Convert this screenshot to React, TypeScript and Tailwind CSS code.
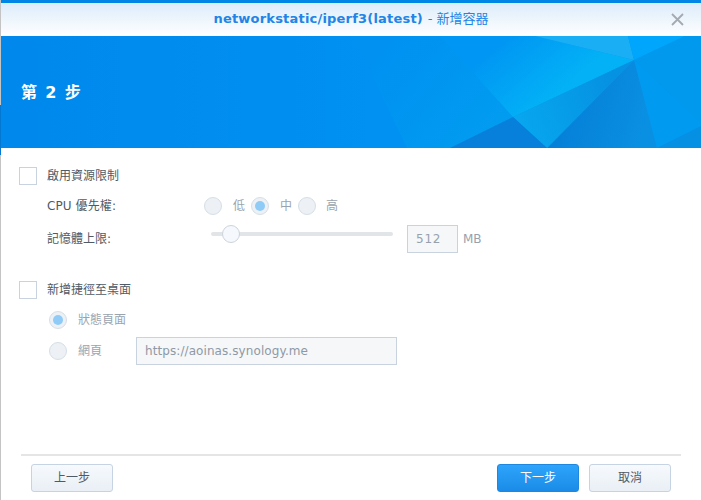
const font = "font-['DejaVu_Sans','Noto_Sans_CJK_TC',sans-serif]";

function Checkbox() {
  return <span className="h-[18px] w-[18px] shrink-0 border border-[#c8d3df] bg-white" />;
}

function Radio({ checked = false }: { checked?: boolean }) {
  return (
    <span className="flex h-[18px] w-[18px] shrink-0 items-center justify-center rounded-full border border-[#d5dee7] bg-[#edf1f5]">
      {checked && <span className="h-[10px] w-[10px] rounded-full bg-[#8fcbf7]" />}
    </span>
  );
}

// x coords here are page x, hence the viewBox offset of 1
function Banner() {
  return (
    <svg className="absolute inset-0 h-full w-full" viewBox="1 0 700 112" preserveAspectRatio="none">
      <defs>
        <linearGradient id="base" x1="0" y1="0" x2="1" y2="0">
          <stop offset="0" stopColor="#0088ec" />
          <stop offset="1" stopColor="#0099f8" />
        </linearGradient>
        <linearGradient id="left" x1="380" y1="0" x2="500" y2="100" gradientUnits="userSpaceOnUse">
          <stop offset="0" stopColor="#0091f1" />
          <stop offset="1" stopColor="#019cf0" />
        </linearGradient>
        <linearGradient id="bright" x1="490" y1="15" x2="540" y2="75" gradientUnits="userSpaceOnUse">
          <stop offset="0" stopColor="#0096f3" />
          <stop offset="1" stopColor="#03b2f6" />
        </linearGradient>
        <linearGradient id="mid" x1="520" y1="85" x2="610" y2="50" gradientUnits="userSpaceOnUse">
          <stop offset="0" stopColor="#07a6ee" />
          <stop offset="1" stopColor="#0592e2" />
        </linearGradient>
        <linearGradient id="dark" x1="560" y1="90" x2="640" y2="112" gradientUnits="userSpaceOnUse">
          <stop offset="0" stopColor="#0580d8" />
          <stop offset="1" stopColor="#0a90e2" />
        </linearGradient>
      </defs>
      <rect x="1" width="700" height="112" fill="url(#base)" />
      <polygon points="353,0 440,0 513,81 450,112 407,112" fill="url(#left)" />
      <polygon points="440,0 535,0 634,24 513,81" fill="url(#bright)" />
      <polygon points="535,0 628,0 634,24" fill="#1aaef5" />
      <polygon points="628,0 685,0 634,24" fill="#00a6fb" />
      <polygon points="685,0 701,0 701,88 634,24" fill="#0099ee" />
      <polygon points="634,24 701,88 701,90 657,112" fill="#009bf1" />
      <polygon points="701,90 701,112 657,112" fill="#0590e4" />
      <polygon points="634,24 657,112 547,112" fill="url(#dark)" />
      <polygon points="634,24 547,112 513,81" fill="url(#mid)" />
      <polygon points="513,81 547,112 450,112" fill="#0680da" />
    </svg>
  );
}

export default function App() {
  return (
    <div className={`${font} flex h-[500px] w-[701px] overflow-hidden bg-white`}>
      <div className="flex w-px shrink-0 flex-col">
        <div className="h-[105px] bg-[#c4c4c4]" />
        <div className="h-[50px] bg-[#0478d0]" />
        <div className="flex-1 bg-[#c4c4c4]" />
      </div>
      <div className="flex min-w-0 flex-1 flex-col">
        <div className="h-[3px] shrink-0 bg-[#0086e5]" />
        <header className="relative flex h-[33px] shrink-0 items-center justify-center bg-gradient-to-b from-[#dcecfa] to-white pb-[1px] text-[13px] font-bold tracking-[0.2px] text-[#2184e6]">
          <span>networkstatic/iperf3(latest) <span className="font-normal tracking-normal">- 新增容器</span></span>
          <svg className="absolute right-[17px] top-[10px] h-[13px] w-[13px]" viewBox="0 0 13 13" stroke="#a4aab0" strokeWidth="1.8" fill="none">
            <path d="M1 1l11 11M12 1L1 12" />
          </svg>
        </header>
        <div className="relative flex h-[112px] shrink-0 items-center pl-[20px] pt-[2px]">
          <Banner />
          <h1 className="relative text-[16px] font-bold tracking-[1.4px] text-white">第 2 步</h1>
        </div>

        <main className="flex flex-1 flex-col pl-[18px] pt-[19px] text-[12px] text-[#4f5a66]">
          <label className="flex h-[18px] items-center gap-[10px]">
            <Checkbox />
            <span>啟用資源限制</span>
          </label>
          <div className="mt-[12px] flex h-[18px] items-center pl-[28px]">
            <span className="w-[157px] tracking-[0.1px]">CPU 優先權:</span>
            <div className="flex items-center text-[#9aa4af]">
              <Radio />
              <span className="ml-[11px] w-[18px]">低</span>
              <Radio checked />
              <span className="ml-[11px] w-[18px]">中</span>
              <Radio />
              <span className="ml-[10px]">高</span>
            </div>
          </div>
          <div className="mt-[10px] flex h-[28px] items-center pl-[28px]">
            <span className="w-[164px]">記憶體上限:</span>
            <div className="relative mb-[10px] h-[4px] w-[182px] rounded-full bg-[#e1e5e8]">
              <span className="absolute left-[11px] top-[-7px] h-[18px] w-[18px] rounded-full border border-[#ccd4dc] bg-[#f5f9fd]" />
            </div>
            <span className="ml-[14px] flex h-[28px] w-[51px] items-center border border-[#c8d3df] bg-[#f5f7f9] pl-[8px] tracking-[0.8px] text-[#97a1ad]">512</span>
            <span className="ml-[5px] text-[#97a1ad]">MB</span>
          </div>
          <label className="mt-[28px] flex h-[18px] items-center gap-[10px]">
            <Checkbox />
            <span>新增捷徑至桌面</span>
          </label>
          <div className="mt-[12px] flex h-[18px] items-center gap-[11px] pl-[30px] text-[#9aa4af]">
            <Radio checked />
            <span>狀態頁面</span>
          </div>
          <div className="mt-[8px] flex h-[28px] items-center pl-[30px] text-[#9aa4af]">
            <Radio />
            <span className="ml-[11px] w-[58px]">網頁</span>
            <span className="flex h-[28px] w-[261px] items-center border border-[#c8d3df] bg-[#f5f7f9] pl-[8px] tracking-[0.08px] text-[#8f99a5]">https://aoinas.synology.me</span>
          </div>
        </main>

        <footer className="mb-[8px] ml-[20px] mr-[20px] flex items-center border-t-2 border-[#e5e5e5] px-[10px] pt-[8px] text-[12px]">
          <button className="h-[28px] w-[82px] rounded-[3px] border border-[#c5d3e2] bg-gradient-to-b from-[#f6fafd] to-[#e9eff5] text-[#4f5a66]">上一步</button>
          <button className="ml-auto h-[28px] w-[82px] rounded-[3px] border border-[#1e88de] bg-gradient-to-b from-[#2ea4fb] to-[#1a8ce8] text-white">下一步</button>
          <button className="ml-[10px] h-[28px] w-[82px] rounded-[3px] border border-[#c5d3e2] bg-gradient-to-b from-[#f6fafd] to-[#e9eff5] text-[#4f5a66]">取消</button>
        </footer>
      </div>
    </div>
  );
}
